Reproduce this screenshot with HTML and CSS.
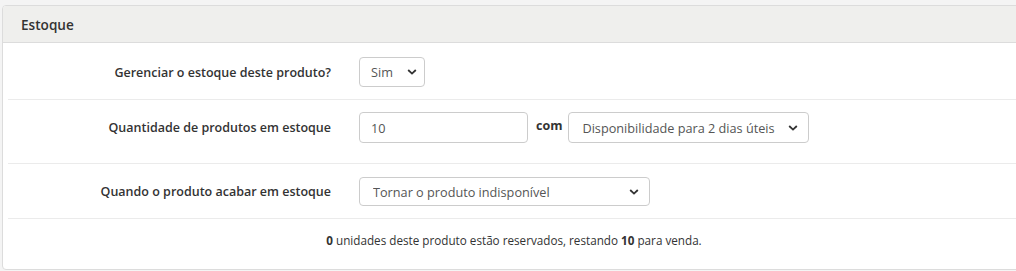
FILE: index.html
```html
<!DOCTYPE html>
<html lang="pt-BR">
<head>
<meta charset="utf-8">
<link rel="stylesheet" href="styles.css">
</head>
<body>
<div class="panel">
  <div class="panel-head">Estoque</div>
  <div class="row row1">
    <label class="lbl">Gerenciar o estoque deste produto?</label>
    <div class="ctrls">
      <div class="sel sel-sim">
        <select><option>Sim</option></select>
        <svg class="chev" viewBox="0 0 10 6" width="10" height="6"><path d="M1.2 1 L5 4.6 L8.8 1" fill="none" stroke="#333" stroke-width="1.8"/></svg>
      </div>
    </div>
  </div>
  <div class="row row2">
    <label class="lbl">Quantidade de produtos em estoque</label>
    <div class="ctrls">
      <input class="inp" type="text" value="10">
      <span class="com">com</span>
      <div class="sel sel-disp">
        <select><option>Disponibilidade para 2 dias úteis</option></select>
        <svg class="chev" viewBox="0 0 10 6" width="10" height="6"><path d="M1.2 1 L5 4.6 L8.8 1" fill="none" stroke="#333" stroke-width="1.8"/></svg>
      </div>
    </div>
  </div>
  <div class="row row3">
    <label class="lbl">Quando o produto acabar em estoque</label>
    <div class="ctrls">
      <div class="sel sel-ind">
        <select><option>Tornar o produto indisponível</option></select>
        <svg class="chev" viewBox="0 0 10 6" width="10" height="6"><path d="M1.2 1 L5 4.6 L8.8 1" fill="none" stroke="#333" stroke-width="1.8"/></svg>
      </div>
    </div>
  </div>
  <div class="foot"><b>0</b> unidades deste produto estão reservados, restando <b>10</b> para venda.</div>
</div>
</body>
</html>
```
FILE: styles.css
```css
html, body {
  margin: 0;
  padding: 0;
  background: #f4f4f4;
  overflow: hidden;
}
body {
  font-family: "Open Sans", "DejaVu Sans", sans-serif;
  font-size: 12.5px;
  color: #333;
  padding: 5px 0 0 2px;
}
.panel {
  width: 1024px;
  height: 265px;
  box-sizing: border-box;
  background: #fff;
  border: 1px solid #dcdcdc;
  border-radius: 4px;
  overflow: hidden;
}
.panel-head {
  height: 36px;
  background: #efefed;
  border-bottom: 1px solid #dcdcdc;
  display: flex;
  align-items: center;
  padding-left: 18px;
  font-size: 13.6px;
  font-weight: 600;
  color: #333;
}
.row {
  display: grid;
  grid-template-columns: 323px 1fr;
  column-gap: 28px;
  margin-left: 5px;
  border-bottom: 1px solid #ebebeb;
  align-items: center;
}
.row1 { padding: 14px 0 12px; }
.row2 { padding: 12px 0 20px; }
.row3 { padding: 13px 0 12px; }
.lbl {
  text-align: right;
  font-weight: 600;
  color: #333;
}
.ctrls {
  display: flex;
  align-items: center;
}
.sel {
  position: relative;
}
.sel select {
  appearance: none;
  -webkit-appearance: none;
  display: block;
  box-sizing: border-box;
  border: 1px solid #cccccc;
  border-radius: 4px;
  background: #fff;
  font-family: "Open Sans", "DejaVu Sans", sans-serif;
  font-size: 12.7px;
  color: #555;
  padding: 0 0 0 11px;
  margin: 0;
}
.sel .chev {
  position: absolute;
  top: 50%;
  margin-top: -3px;
  right: 11px;
  pointer-events: none;
}
.sel-sim .chev { right: 8px; }
.sel-sim select { width: 66px; height: 30px; }
.sel-disp select { width: 241px; height: 31px; padding-left: 13px; }
.sel-ind select { width: 291px; height: 29px; padding-left: 13px; }
.inp {
  box-sizing: border-box;
  width: 169px;
  height: 31px;
  border: 1px solid #cccccc;
  border-radius: 4px;
  padding: 0 11px;
  font-family: "Open Sans", "DejaVu Sans", sans-serif;
  font-size: 12.7px;
  color: #555;
  margin: 0;
}
.com {
  font-weight: 700;
  margin: 0 6px 0 8px;
  position: relative;
  top: -2px;
}
.foot {
  text-align: center;
  font-size: 11.7px;
  padding: 13px 0 0 0;
  color: #333;
}
.foot b { font-weight: 700; }
```
